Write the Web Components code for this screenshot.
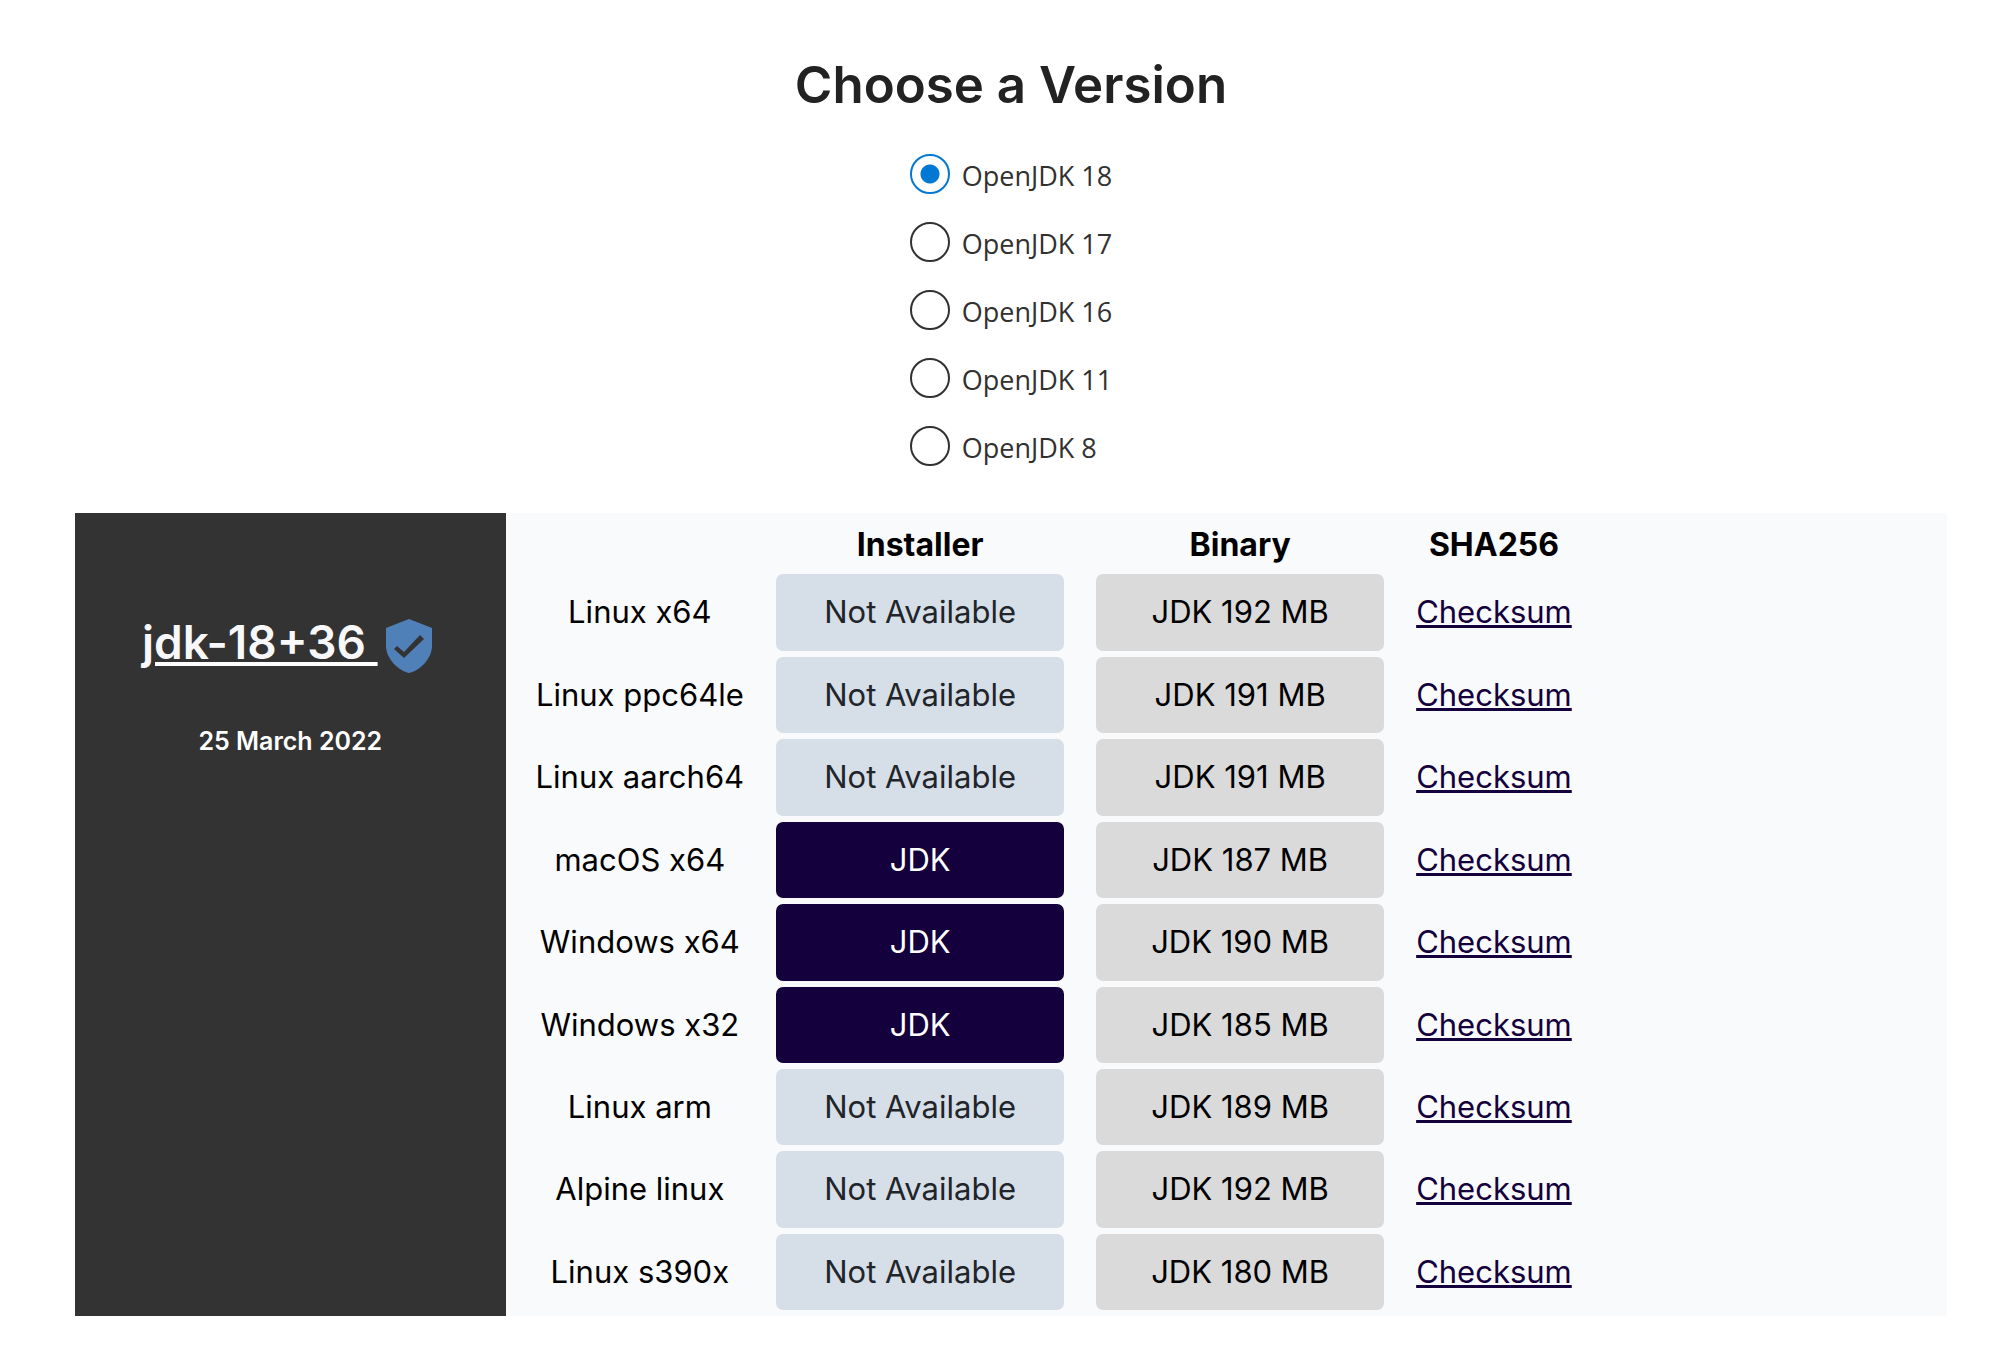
<!DOCTYPE html>
<html lang="en">
<head>
<meta charset="utf-8">
<title>Choose a Version</title>
<style>
  body { margin: 0; background: #fff; color: #000; font-family: Inter, "Liberation Sans", sans-serif; }
</style>
</head>
<body>
<download-page>
  <version-picker versions="18,17,16,11,8" selected="18"></version-picker>
  <release-panel>
    <release-info slot="info" name="jdk-18+36" date="25 March 2022"></release-info>
    <download-table></download-table>
  </release-panel>
</download-page>

<script>
const mount = (host, html) => { host.attachShadow({ mode: 'open' }).innerHTML = html; };

customElements.define('download-page', class extends HTMLElement {
  connectedCallback() {
    mount(this, `
      <style>
        :host { display: block; }
        main { display: flex; flex-direction: column; padding: 54px 49px 38px 75px; }
        h1 { margin: 0 0 38px; font-size: 51px; line-height: 62px; font-weight: 600; text-align: center; color: #222; }
      </style>
      <main><h1>Choose a Version</h1><slot></slot></main>`);
  }
});

customElements.define('version-picker', class extends HTMLElement {
  connectedCallback() {
    const selected = this.getAttribute('selected');
    const options = this.getAttribute('versions').split(',').map(v => `
      <label for="v${v}"><input type="radio" name="version" id="v${v}" value="${v}"${v === selected ? ' checked' : ''}><span>OpenJDK ${v}</span></label>`).join('');
    mount(this, `
      <style>
        :host { display: flex; justify-content: center; margin-bottom: 43px; font-family: "Open Sans", "Noto Sans", sans-serif; font-size: 27px; line-height: 44px; color: #323130; }
        fieldset { display: flex; flex-direction: column; gap: 24px; margin: 0; padding: 0; border: 0; }
        label { display: flex; align-items: flex-start; gap: 12px; }
        input { appearance: none; box-sizing: border-box; width: 40px; height: 40px; margin: 0; border: 2px solid #323130; border-radius: 50%; background: #fff; }
        input:checked { border-color: #0078d4; background: radial-gradient(circle, #0078d4 9px, #fff 10px); }
      </style>
      <fieldset aria-label="Version">${options}</fieldset>`);
  }
});

customElements.define('release-panel', class extends HTMLElement {
  connectedCallback() {
    mount(this, `
      <style>
        :host { display: flex; background: #f8fafb; }
        aside { flex: 0 0 23%; background: #333; color: #fff; }
        section { flex: 1; padding-left: 14px; }
      </style>
      <aside><slot name="info"></slot></aside><section><slot></slot></section>`);
  }
});

customElements.define('release-info', class extends HTMLElement {
  connectedCallback() {
    mount(this, `
      <style>
        :host { display: block; padding-top: 101px; text-align: center; font-weight: 600; }
        h2 { margin: 0 0 53px; font-size: 46px; line-height: 56px; font-weight: 600; }
        a { color: #f8f8fa; text-decoration: underline #fff 4px; text-underline-offset: 3px; }
        svg { width: 46px; height: 54px; margin: 0 7px 0 8px; vertical-align: middle; }
        time { display: block; font-size: 25px; line-height: 30px; }
      </style>
      <h2><a href="#release">${this.getAttribute('name')}&nbsp;</a><svg viewBox="0 0 46 54" role="img" aria-label="Verified">
        <path fill="#5080b8" d="M23 0 46 9V27C46 40 33 52 23 54C13 52 0 40 0 27V9Z"/>
        <path fill="#333" d="M8 30 11 27 18 33 34 16 38 20 18 39Z"/>
      </svg></h2>
      <time datetime="2022-03-25">${this.getAttribute('date')}</time>`);
  }
});

customElements.define('download-table', class extends HTMLElement {
  connectedCallback() {
    const builds = [
      ['Linux x64', false, 192], ['Linux ppc64le', false, 191], ['Linux aarch64', false, 191],
      ['macOS x64', true, 187], ['Windows x64', true, 190], ['Windows x32', true, 185],
      ['Linux arm', false, 189], ['Alpine linux', false, 192], ['Linux s390x', false, 180]
    ];
    const rows = builds.map(([platform, installer, size]) => `
      <tr>
        <th scope="row">${platform}</th>
        <td>${installer ? '<a class="btn installer" href="#installer">JDK</a>' : '<button class="btn" type="button" disabled>Not Available</button>'}</td>
        <td><a class="btn binary" href="#binary">JDK ${size} MB</a></td>
        <td><a class="checksum" href="#checksum">Checksum</a></td>
      </tr>`).join('');
    mount(this, `
      <style>
        :host { display: block; }
        table { border-collapse: collapse; text-align: center; font-size: 31px; line-height: 1.24; white-space: nowrap; }
        th, td { padding: 0 16px 6px; vertical-align: middle; }
        th { font-weight: 400; }
        thead th { padding: 13px 16px 10px; font-size: 32px; line-height: 1.2; font-weight: 700; }
        .btn { display: block; box-sizing: border-box; width: 288px; padding: 19px 0; border: 0; border-radius: 7px; background: #d6dee8; color: #212529; font: inherit; text-align: center; text-decoration: none; }
        .installer { background: #14003c; color: #fff; }
        .binary { background: #dadada; color: #000; }
        .checksum { color: #14003c; text-decoration: underline 3px; text-underline-offset: 2px; }
      </style>
      <table>
        <thead><tr><td></td><th scope="col">Installer</th><th scope="col">Binary</th><th scope="col">SHA256</th></tr></thead>
        <tbody>${rows}</tbody>
      </table>`);
  }
});
</script>
</body>
</html>
